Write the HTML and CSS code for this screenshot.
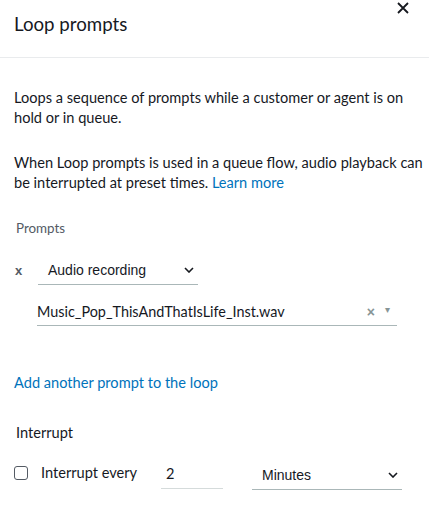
FILE: index.html
```html
<!DOCTYPE html>
<html>
<head>
<meta charset="utf-8">
<link rel="stylesheet" href="styles.css">
</head>
<body>
<div class="panel">
  <div class="header">
    <h1 class="title">Loop prompts</h1>
    <span class="close" aria-label="Close">
      <svg width="12" height="12" viewBox="0 0 12 12"><path d="M1 1L11 11M11 1L1 11" stroke="#16191f" stroke-width="1.8" fill="none"/></svg>
    </span>
  </div>
  <div class="body">
    <p class="para">Loops a sequence of prompts while a customer or agent is on hold or in queue.</p>
    <p class="para p2"><span class="line">When Loop prompts is used in a queue flow, audio playback can</span> <span class="line">be interrupted at preset times.</span> <a class="link">Learn more</a></p>
    <div class="label prompts-label">Prompts</div>
    <div class="prompt-row">
      <span class="remove">x</span>
      <div class="select audio-select"><span>Audio recording</span><svg class="chev" width="10" height="6" viewBox="0 0 10 6"><path d="M1 1L5 5L9 1" stroke="#16191f" stroke-width="1.6" fill="none"/></svg></div>
    </div>
    <div class="file-row">
      <div class="combo"><span class="file">Music_Pop_ThisAndThatIsLife_Inst.wav</span><span class="combo-icons"><span class="clr">×</span><span class="arr">▾</span></span></div>
    </div>
    <a class="link add">Add another prompt to the loop</a>
    <div class="label interrupt-label">Interrupt</div>
    <div class="interrupt-row">
      <span class="checkbox"></span>
      <span class="every">Interrupt every</span>
      <div class="num">2</div>
      <div class="select unit-select"><span>Minutes</span><svg class="chev" width="10" height="6" viewBox="0 0 10 6"><path d="M1 1L5 5L9 1" stroke="#16191f" stroke-width="1.6" fill="none"/></svg></div>
    </div>
  </div>
</div>
</body>
</html>
```
FILE: styles.css
```css
html, body { margin: 0; padding: 0; background: #fff; }
body { font-family: Lato, "Open Sans", sans-serif; color: #16191f; width: 437px; height: 516px; overflow: hidden; }
.panel { width: 429px; }
.header { position: relative; height: 57px; border-bottom: 1px solid #e9ebed; }
.title { margin: 0; padding: 13px 0 0 14px; font-size: 18.7px; font-weight: 400; line-height: 22px; color: #16191f; }
.close { position: absolute; left: 397px; top: 2px; width: 12px; height: 12px; display: block; }
.close svg { display: block; }
.body { padding: 0 0 0 14px; }
.para { margin: 0; font-size: 14.6px; line-height: 20px; padding-top: 30px; width: 410px; }
.p2 { padding-top: 25px; }
.line { white-space: nowrap; }
.link { color: #0073bb; text-decoration: none; }
.label { font-size: 13.4px; color: #545b64; line-height: 18px; }
.prompts-label { padding: 26px 0 0 2px; }
.prompt-row { display: flex; align-items: flex-end; margin-top: 22px; height: 26px; }
.remove { width: 23px; font-family: "Liberation Sans", Arial, sans-serif; font-size: 13px; font-weight: 700; color: #545b64; padding: 0 0 7px 1px; }
.select { display: flex; align-items: center; justify-content: space-between; border-bottom: 1px solid #aab7b8; font-family: "Liberation Sans", Arial, sans-serif; font-size: 14px; color: #16191f; box-sizing: border-box; }
.audio-select { width: 160px; height: 26px; padding: 0 4px 3px 10px; }
.file-row { padding-left: 23px; margin-top: 15px; }
.combo { display: flex; align-items: center; justify-content: space-between; width: 360px; height: 26px; border-bottom: 1px solid #aab7b8; box-sizing: border-box; padding-bottom: 2px; font-size: 14.4px; }
.combo-icons { display: flex; gap: 10px; color: #879596; font-family: "Liberation Sans", Arial, sans-serif; font-size: 12px; padding-right: 7px; }
.clr { font-weight: 700; font-size: 14px; }
.arr { font-size: 10px; }
.add { display: block; font-size: 14.6px; line-height: 20px; margin-top: 47px; }
.interrupt-label { font-size: 14.6px; color: #16191f; padding: 30px 0 0 2px; line-height: 20px; }
.interrupt-row { display: flex; align-items: flex-start; margin-top: 16px; height: 40px; }
.checkbox { width: 12px; height: 12px; border: 1px solid #545b64; border-radius: 3px; margin-top: 7px; flex: none; }
.every { margin-left: 13px; font-size: 14.6px; line-height: 20px; margin-top: 4px; width: 120px; }
.num { width: 62px; box-sizing: border-box; padding-left: 5px; font-size: 14.6px; line-height: 20px; padding-top: 5px; height: 30px; border-bottom: 1px solid #d5dbdb; }
.unit-select { margin-left: 29px; width: 150px; height: 31px; padding: 2px 4px 0 10px; align-items: center; }
```
